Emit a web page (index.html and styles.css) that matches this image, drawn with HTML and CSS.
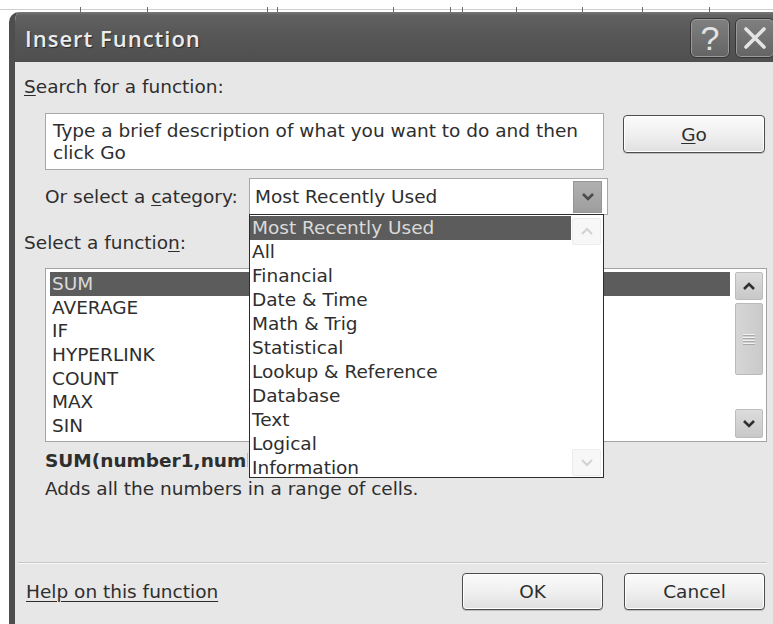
FILE: index.html
```html
<!DOCTYPE html>
<html lang="en">
<head>
<meta charset="utf-8">
<title>Insert Function</title>
<link rel="stylesheet" href="styles.css">
</head>
<body>
<div class="sheet-edge">
  <span></span><span></span><span></span><span></span><span></span><span></span>
  <span></span><span></span><span></span><span></span><span></span><span></span>
</div>

<div class="dialog">
  <div class="titlebar">
    <span class="title">Insert Function</span>
    <div class="caption-buttons">
      <span class="cap-btn help">?</span>
      <span class="cap-btn close">
        <svg width="26" height="26" viewBox="0 0 26 26"><path d="M4 4 L22 22 M22 4 L4 22" stroke="#e4e4e4" stroke-width="3.6" stroke-linecap="round" fill="none"/></svg>
      </span>
    </div>
  </div>

  <div class="client">
    <div class="label"><u>S</u>earch for a function:</div>

    <div class="search-row">
      <div class="searchbox">Type a brief description of what you want to do and then click Go</div>
      <button class="btn go"><u>G</u>o</button>
    </div>

    <div class="category-row">
      <span class="category-label">Or select a <u>c</u>ategory:</span>
      <div class="combo">
        <span class="combo-value">Most Recently Used</span>
        <span class="combo-arrow">
          <svg width="14" height="10" viewBox="0 0 14 10"><path d="M2 2 L7 7 L12 2" stroke="#4a4a4a" stroke-width="2.6" fill="none"/></svg>
        </span>
        <div class="dropdown">
          <ul class="dd-items">
            <li class="selected">Most Recently Used</li>
            <li>All</li>
            <li>Financial</li>
            <li>Date &amp; Time</li>
            <li>Math &amp; Trig</li>
            <li>Statistical</li>
            <li>Lookup &amp; Reference</li>
            <li>Database</li>
            <li>Text</li>
            <li>Logical</li>
            <li>Information</li>
          </ul>
          <div class="dd-scroll">
            <span class="dd-arrow">
              <svg width="14" height="9" viewBox="0 0 14 9"><path d="M2 7 L7 2 L12 7" stroke="#d2d2d2" stroke-width="2" fill="none"/></svg>
            </span>
            <span class="dd-arrow">
              <svg width="14" height="9" viewBox="0 0 14 9"><path d="M2 2 L7 7 L12 2" stroke="#d2d2d2" stroke-width="2" fill="none"/></svg>
            </span>
          </div>
        </div>
      </div>
    </div>

    <div class="label fn-label">Select a functio<u>n</u>:</div>

    <div class="listbox">
      <ul class="fn-items">
        <li class="selected">SUM</li>
        <li>AVERAGE</li>
        <li>IF</li>
        <li>HYPERLINK</li>
        <li>COUNT</li>
        <li>MAX</li>
        <li>SIN</li>
      </ul>
      <div class="vscroll">
        <span class="sb-btn">
          <svg width="16" height="10" viewBox="0 0 16 10"><path d="M3 8 L8 3 L13 8" stroke="#303030" stroke-width="2.6" fill="none"/></svg>
        </span>
        <span class="sb-thumb"><i></i><i></i><i></i><i></i></span>
        <span class="sb-track"></span>
        <span class="sb-btn">
          <svg width="16" height="10" viewBox="0 0 16 10"><path d="M3 2 L8 7 L13 2" stroke="#303030" stroke-width="2.6" fill="none"/></svg>
        </span>
      </div>
    </div>

    <div class="signature">SUM(number1,number2,...)</div>
    <div class="desc">Adds all the numbers in a range of cells.</div>

    <div class="separator"></div>

    <div class="footer">
      <a class="help-link" href="#">Help on this function</a>
      <button class="btn">OK</button>
      <button class="btn">Cancel</button>
    </div>
  </div>
</div>
</body>
</html>
```

FILE: styles.css
```css
* { box-sizing: border-box; }

html, body { margin: 0; padding: 0; }

body {
  width: 773px;
  height: 624px;
  overflow: hidden;
  background: #ffffff;
  font-family: "DejaVu Sans", sans-serif;
  font-size: 18.5px;
  color: #2e2e2e;
}

ul { list-style: none; margin: 0; padding: 0; }

u { text-decoration-thickness: 1px; text-underline-offset: 2px; }

/* grid lines of the worksheet peeking above the dialog */
.sheet-edge {
  height: 12px;
  display: grid;
  grid-template-columns: 81px 67px 120px 10px 116px 57px 12px 54px 66px 60px 67px 1fr;
  background: linear-gradient(to bottom, transparent 9px, #d0d0d0 9px, #d0d0d0 10px, transparent 10px);
}
.sheet-edge span {
  align-self: end;
  height: 5px;
  border-right: 1px solid #6a6a6a;
}
.sheet-edge span:last-child { border-right: 0; }

/* dialog frame */
.dialog {
  width: 800px;
  margin-left: 9px;
  border-left: 6px solid #4e4e4e;
  border-top-left-radius: 10px;
  overflow: hidden;
}

.titlebar {
  height: 50px;
  display: flex;
  align-items: center;
  padding: 0 34px 0 10px;
  background: linear-gradient(to bottom, #7a7a7a 0, #626262 3px, #585858 40%, #4f4f4f 100%);
}

.title {
  font-family: "Open Sans", sans-serif;
  font-weight: 600;
  font-size: 22px;
  letter-spacing: 1px;
  color: #ececec;
  text-shadow: 1px 1px 1px #2a2a2a;
  padding-top: 2px;
}

.caption-buttons {
  margin-left: auto;
  display: flex;
  gap: 5px;
  padding-top: 2px;
}

.cap-btn {
  width: 40px;
  height: 40px;
  display: flex;
  align-items: center;
  justify-content: center;
  border: 1px solid #363636;
  border-radius: 6px;
  box-shadow: inset 0 0 0 1px #9a9a9a;
  background: linear-gradient(to bottom, #808080, #646464);
  color: #e4e4e4;
}
.cap-btn.help {
  font-family: "Liberation Sans", sans-serif;
  font-size: 34px;
  line-height: 1;
}

/* client area */
.client {
  height: 562px;
  padding: 15px 0 0 9px;
  background: #e7e7e7;
}

.label { line-height: 20px; }

.search-row {
  display: flex;
  align-items: flex-start;
  margin: 16px 0 0 21px;
}

.searchbox {
  width: 559px;
  height: 57px;
  padding: 6px 6px 0 7px;
  line-height: 22px;
  background: #ffffff;
  border: 1px solid #a8a8a8;
}

.btn {
  font: inherit;
  color: #2e2e2e;
  width: 141px;
  height: 37px;
  padding: 0;
  border: 1px solid #4c4c4c;
  border-radius: 4px;
  background: linear-gradient(to bottom, #fbfbfb 0, #f0f0f0 50%, #e0e0e0 100%);
  box-shadow: inset 0 0 0 1px #ffffff, 0 1px 0 #bdbdbd;
}

.btn.go {
  width: 142px;
  height: 38px;
  margin: 2px 0 0 19px;
}

.category-row {
  display: flex;
  align-items: center;
  margin: 8px 0 0 21px;
}

.category-label { width: 204px; white-space: nowrap; }

.combo {
  position: relative;
  width: 359px;
  height: 37px;
  display: flex;
  align-items: center;
  padding: 0 5px 0 5px;
  background: #ffffff;
  border: 1px solid #a8a8a8;
}

.combo-arrow {
  margin-left: auto;
  width: 29px;
  height: 32px;
  display: flex;
  align-items: center;
  justify-content: center;
  background: linear-gradient(to bottom, #b0b0b0, #9e9e9e);
  border: 1px solid #969696;
}

/* open category list, drawn over the dialog */
.dropdown {
  position: absolute;
  left: -1px;
  top: 35px;
  width: 355px;
  height: 264px;
  display: flex;
  background: #ffffff;
  border: 1px solid #2c2c2c;
  z-index: 2;
}

.dd-items {
  width: 321px;
  padding-top: 1px;
}
.dd-items li {
  height: 24px;
  line-height: 24px;
  padding-left: 2px;
  white-space: nowrap;
}

li.selected {
  background: #5c5c5c;
  color: #dadada;
}

.dd-scroll {
  width: 32px;
  display: flex;
  flex-direction: column;
  justify-content: space-between;
  padding: 3px 2px 1px 1px;
}
.dd-arrow {
  height: 27px;
  display: flex;
  align-items: center;
  justify-content: center;
  background: #f7f7f7;
  border: 1px solid #ececec;
  border-radius: 2px;
}

.fn-label { margin-top: 18px; }

.listbox {
  margin: 15px 0 0 21px;
  width: 722px;
  height: 174px;
  display: flex;
  padding: 3px 3px 3px 4px;
  background: #ffffff;
  border: 1px solid #a4a4a4;
}

.fn-items { width: 680px; }
.fn-items li {
  height: 23.7px;
  line-height: 23.7px;
  padding-left: 2px;
}

.vscroll {
  width: 28px;
  margin-left: 5px;
  display: flex;
  flex-direction: column;
}

.sb-btn {
  height: 28px;
  display: flex;
  align-items: center;
  justify-content: center;
  background: linear-gradient(to bottom, #dcdcdc, #c8c8c8);
  border: 1px solid #bcbcbc;
  border-radius: 2px;
}
.sb-btn:last-child { height: 29px; }

.sb-thumb {
  margin-top: 3px;
  height: 72px;
  display: flex;
  flex-direction: column;
  align-items: center;
  justify-content: center;
  gap: 2px;
  background: linear-gradient(to right, #d6d6d6, #cacaca);
  border: 1px solid #bababa;
  border-radius: 2px;
}
.sb-thumb i {
  width: 12px;
  height: 1px;
  background: #f2f2f2;
  box-shadow: 0 1px 0 #a8a8a8;
}

.sb-track { flex: 1; }

/* the open category list covers the tail of this line */
.signature {
  width: 203px;
  margin: 9px 0 0 21px;
  line-height: 20px;
  font-weight: bold;
  white-space: nowrap;
  overflow: hidden;
}

.desc {
  margin: 8px 0 0 21px;
  line-height: 20px;
}

.separator {
  margin: 63px 0 0 -6px;
  width: 749px;
  height: 2px;
  border-top: 1px solid #c6c6c6;
  border-bottom: 1px solid #f8f8f8;
}

.footer {
  width: 741px;
  margin-top: 9px;
  display: flex;
  align-items: center;
  gap: 21px;
}

.help-link {
  margin: 0 auto 0 2px;
  color: #2e2e2e;
  text-decoration: underline;
  text-decoration-thickness: 1px;
  text-underline-offset: 3px;
}
```
